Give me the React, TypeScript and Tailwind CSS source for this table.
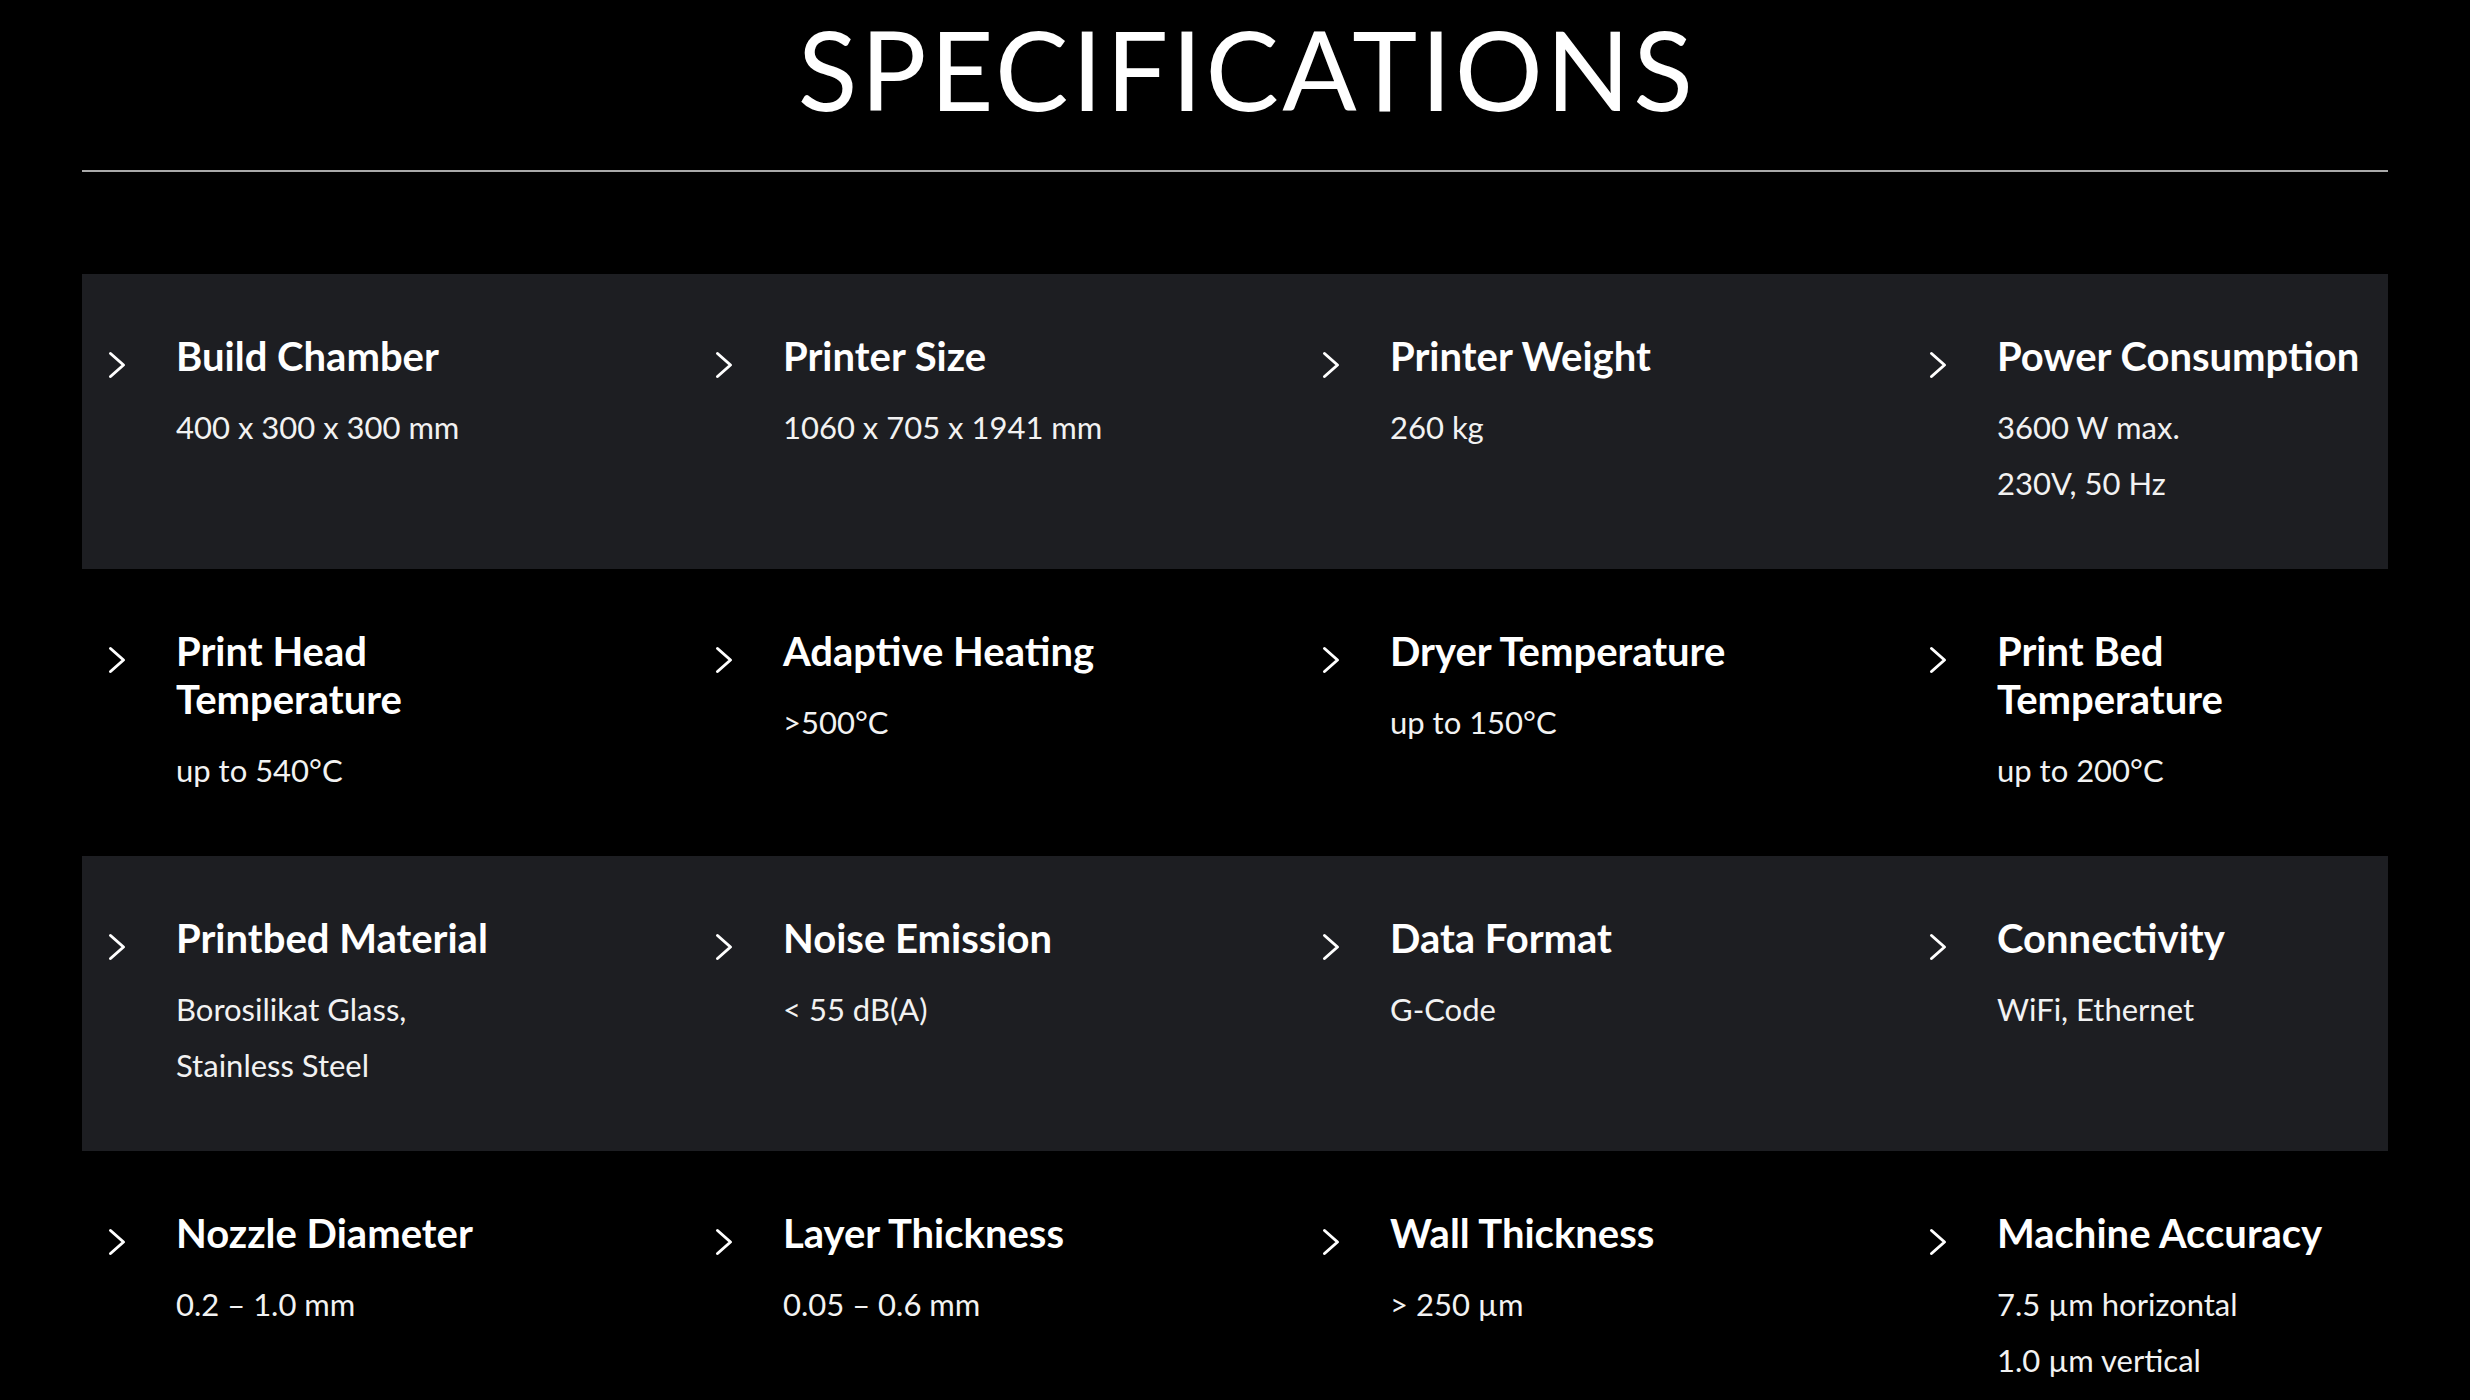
import React from 'react';

type Spec = {
    title: string;
    values: string[];
};

const rows: Spec[][] = [
    [
        { title: "Build Chamber", values: ["400 x 300 x 300 mm"] },
        { title: "Printer Size", values: ["1060 x 705 x 1941 mm"] },
        { title: "Printer Weight", values: ["260 kg"] },
        { title: "Power Consumption", values: ["3600 W max.", "230V, 50 Hz"] },
    ],
    [
        { title: "Print Head Temperature", values: ["up to 540°C"] },
        { title: "Adaptive Heating", values: [">500°C"] },
        { title: "Dryer Temperature", values: ["up to 150°C"] },
        { title: "Print Bed Temperature", values: ["up to 200°C"] },
    ],
    [
        { title: "Printbed Material", values: ["Borosilikat Glass,", "Stainless Steel"] },
        { title: "Noise Emission", values: ["< 55 dB(A)"] },
        { title: "Data Format", values: ["G-Code"] },
        { title: "Connectivity", values: ["WiFi, Ethernet"] },
    ],
    [
        { title: "Nozzle Diameter", values: ["0.2 – 1.0 mm"] },
        { title: "Layer Thickness", values: ["0.05 – 0.6 mm"] },
        { title: "Wall Thickness", values: ["> 250 µm"] },
        { title: "Machine Accuracy", values: ["7.5 µm horizontal", "1.0 µm vertical"] },
    ],
];

const Chevron = () => (
    <svg width="18" height="28" viewBox="0 0 18 28" fill="none" className="mt-[19px] shrink-0">
        <polyline points="2.5,2.5 15.5,14 2.5,25.5" stroke="white" strokeWidth="3" strokeLinecap="round" strokeLinejoin="round" />
    </svg>
);

const SpecItem = ({ spec }: { spec: Spec }) => (
    <div className="flex">
        <Chevron />
        <div className="ml-[50px]">
            <h3 className="max-w-[385px] text-[40px] leading-[48px] font-bold text-white">{spec.title}</h3>
            <div className="mt-[19px]">
                {spec.values.map((v) => (
                    <p key={v} className="text-[31px] leading-[56px] text-[#f2f2f2]">{v}</p>
                ))}
            </div>
        </div>
    </div>
);

export default function App() {
    return (
        <div className="min-h-screen bg-black px-[82px] font-['Lato',sans-serif]">
            <h1 className="pt-[13px] pl-[24px] text-center text-[110px] leading-[110px] font-normal tracking-[0.03em] text-white">
                SPECIFICATIONS
            </h1>
            <div className="mt-[47px] border-t-2 border-[#aaaaaa]" />
            <div className="mt-[102px]">
                {rows.map((row, i) => (
                    <div
                        key={i}
                        className={`grid grid-cols-[607px_607px_607px_1fr] pl-[26px] pt-[58px] pb-[58px] ${i % 2 === 0 ? "bg-[#1d1e22]" : ""}`}
                    >
                        {row.map((spec) => (
                            <SpecItem key={spec.title} spec={spec} />
                        ))}
                    </div>
                ))}
            </div>
        </div>
    );
}
